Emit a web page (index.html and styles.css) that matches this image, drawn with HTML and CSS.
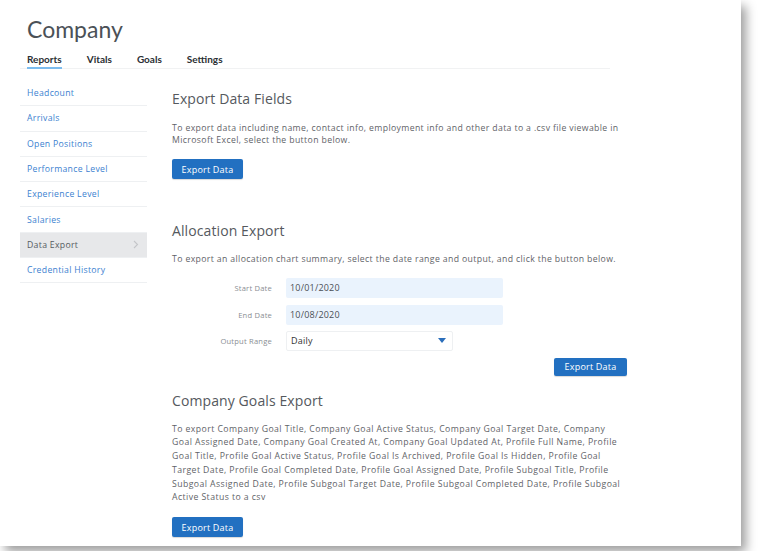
FILE: index.html
```html
<!DOCTYPE html>
<html lang="en">
<head>
<meta charset="utf-8">
<title>Company</title>
<link rel="stylesheet" href="styles.css">
</head>
<body>
<div class="page">
  <h1 class="title">Company</h1>
  <nav class="tabs">
    <a class="tab active">Reports</a>
    <a class="tab">Vitals</a>
    <a class="tab">Goals</a>
    <a class="tab">Settings</a>
  </nav>
  <div class="layout">
    <ul class="sidebar">
      <li class="side-item">Headcount</li>
      <li class="side-item">Arrivals</li>
      <li class="side-item">Open Positions</li>
      <li class="side-item">Performance Level</li>
      <li class="side-item">Experience Level</li>
      <li class="side-item">Salaries</li>
      <li class="side-item current">Data Export
        <svg class="chev" width="6" height="9" viewBox="0 0 6 9"><path d="M1 1l3.5 3.5L1 8" fill="none" stroke="#c4c6c9" stroke-width="1.1"/></svg>
      </li>
      <li class="side-item">Credential History</li>
    </ul>
    <main class="main">
      <section class="section s1">
        <h2 class="heading">Export Data Fields</h2>
        <p class="text">To export data including name, contact info, employment info and other data to a .csv file viewable in Microsoft Excel, select the button below.</p>
        <button class="btn">Export Data</button>
      </section>
      <section class="section s2">
        <h2 class="heading">Allocation Export</h2>
        <p class="text">To export an allocation chart summary, select the date range and output, and click the button below.</p>
        <div class="form">
          <label class="label">Start Date</label>
          <div class="input">10/01/2020</div>
          <label class="label">End Date</label>
          <div class="input">10/08/2020</div>
          <label class="label">Output Range</label>
          <div class="select">Daily
            <svg class="caret" width="8" height="5" viewBox="0 0 8 5"><path d="M0 0h8L4 5z" fill="#2a6ebb"/></svg>
          </div>
        </div>
        <div class="right"><button class="btn">Export Data</button></div>
      </section>
      <section class="section s3">
        <h2 class="heading">Company Goals Export</h2>
        <p class="text long">To export Company Goal Title, Company Goal Active Status, Company Goal Target Date, Company Goal Assigned Date, Company Goal Created At, Company Goal Updated At, Profile Full Name, Profile Goal Title, Profile Goal Active Status, Profile Goal Is Archived, Profile Goal Is Hidden, Profile Goal Target Date, Profile Goal Completed Date, Profile Goal Assigned Date, Profile Subgoal Title, Profile Subgoal Assigned Date, Profile Subgoal Target Date, Profile Subgoal Completed Date, Profile Subgoal Active Status to a csv</p>
        <button class="btn">Export Data</button>
      </section>
    </main>
  </div>
</div>
</body>
</html>
```
FILE: styles.css
```css
* { box-sizing: border-box; }
html, body { margin: 0; padding: 0; }
body {
  width: 759px;
  height: 551px;
  overflow: hidden;
  background: #fff;
  font-family: "Open Sans", "Liberation Sans", sans-serif;
}
.page {
  width: 741px;
  height: 546px;
  background: #fff;
  box-shadow: 5px 6px 10px rgba(0, 0, 0, 0.38);
  overflow: hidden;
}
.title {
  margin: 0;
  padding: 14px 0 0 27px;
  font-family: "Lato", sans-serif;
  font-size: 23px;
  font-weight: 400;
  color: #4b5157;
  line-height: 30px;
}
.tabs {
  display: flex;
  gap: 25px;
  margin: 7px 131px 0 20px;
  padding-left: 7px;
  border-bottom: 1px solid #f1f2f3;
}
.tab {
  font-family: "Lato", sans-serif;
  font-size: 10px;
  font-weight: 700;
  color: #2b2f33;
  padding: 2px 0 2px;
  border-bottom: 2px solid transparent;
  margin-bottom: -1px;
}
.tab.active { border-bottom-color: #7cbcee; }
.layout {
  display: flex;
  margin: 12px 0 0 20px;
}
.sidebar {
  list-style: none;
  margin: 0;
  padding: 0;
  width: 127px;
}
.side-item {
  display: flex;
  align-items: center;
  justify-content: space-between;
  height: 25.3px;
  padding: 0 8px 0 7px;
  border-bottom: 1px solid #eef0f2;
  font-size: 8.7px;
  letter-spacing: 0.3px;
  color: #3c7fd0;
}
.side-item.current {
  background: #e7e8ea;
  color: #555a60;
}
.main {
  margin-left: 25px;
  width: 456px;
}
.heading {
  margin: 0;
  font-size: 14px;
  font-weight: 400;
  letter-spacing: 0.1px;
  color: #55595e;
  line-height: 18px;
}
.text {
  margin: 0;
  font-size: 8.7px;
  letter-spacing: 0.37px;
  line-height: 12.5px;
  color: #5f6368;
}
.s1 { padding-top: 9px; }
.s1 .text { margin-top: 14px; line-height: 12px; }
.s1 .btn { margin-top: 13px; }
.s2 { margin-top: 43px; }
.s2 .text { margin-top: 13px; }
.s3 { margin-top: 16px; }
.s3 .text { margin-top: 13px; line-height: 13.8px; letter-spacing: 0.43px; width: 455px; }
.s3 .btn { margin-top: 12px; }
.btn {
  display: block;
  width: 71px;
  height: 20px;
  border: 0;
  border-radius: 2px;
  background: #2270c1;
  color: #fff;
  font-family: inherit;
  font-size: 9px;
  letter-spacing: 0.2px;
  padding: 0;
  box-shadow: 0 1px 1px rgba(0, 0, 0, 0.15);
}
.form {
  display: grid;
  grid-template-columns: 100px auto;
  column-gap: 14px;
  row-gap: 7px;
  margin-top: 12px;
  align-items: center;
}
.label {
  text-align: right;
  font-size: 7.6px;
  letter-spacing: 0.2px;
  color: #8a8e93;
}
.input {
  width: 217px;
  height: 20px;
  background: #eaf3fd;
  border-radius: 2px;
  font-size: 9px;
  letter-spacing: 0.2px;
  color: #4a4f55;
  display: flex;
  align-items: center;
  padding-left: 4px;
}
.select {
  width: 167px;
  height: 20px;
  margin-top: -1px;
  border: 1px solid #eef0f2;
  border-radius: 2px;
  font-size: 9px;
  letter-spacing: 0.2px;
  color: #333;
  display: flex;
  align-items: center;
  justify-content: space-between;
  padding: 0 6px 0 4px;
}
.right {
  display: flex;
  justify-content: flex-end;
  margin-top: 7px;
  padding-right: 1px;
}
.right .btn { width: 73px; height: 18px; }
```
